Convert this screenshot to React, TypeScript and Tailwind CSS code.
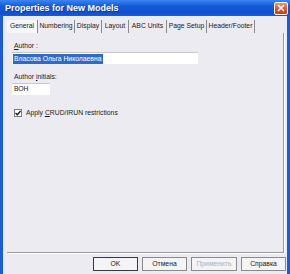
import React from "react";

const tabs: { t: string; w: string }[] = [
  { t: "General", w: "w-[31px]" },
  { t: "Numbering", w: "w-[37px]" },
  { t: "Display", w: "w-[27px]" },
  { t: "Layout", w: "w-[27px]" },
  { t: "ABC Units", w: "w-[38px]" },
  { t: "Page Setup", w: "w-[40px]" },
  { t: "Header/Footer", w: "w-[48px]" },
];

export default function App() {
  return (
    <div
      className="w-[290px] h-[274px] overflow-hidden flex flex-col bg-[#1f5ad6] text-[#1a1a1a]"
      style={{ fontFamily: '"Liberation Sans", Arial, sans-serif' }}
    >
      {/* Title bar */}
      <div className="h-[16px] flex items-center justify-between pl-[5px] pr-[2px] bg-[linear-gradient(#3a86f0,#1458d8_40%,#0f50d0_80%,#1a5ad6)]">
        <span className="text-white font-bold text-[9px] leading-none [text-shadow:1px_1px_0_#0a3a9a]">
          Properties for New Models
        </span>
        <div className="w-[14px] h-[13px] rounded-[2px] border border-white bg-[linear-gradient(#f0906a,#e0502a_60%,#c8401c)] flex items-center justify-center">
          <svg width="8" height="8" viewBox="0 0 8 8">
            <path d="M1 1 L7 7 M7 1 L1 7" stroke="white" strokeWidth="1.6" />
          </svg>
        </div>
      </div>

      {/* Body */}
      <div className="flex-1 mx-[3px] bg-[#ecebf1] flex flex-col text-[6.8px]">
        {/* Tabs */}
        <div className="h-[17px] flex items-end pl-[4px] pt-[4px]">
          {tabs.map((tab, i) => (
            <div
              key={tab.t}
              className={
                tab.w +
                " h-[13px] flex items-center justify-center whitespace-nowrap leading-none border-r border-[#8a8a8a] " +
                (i === 0 ? "bg-[#f6f6f8]" : "")
              }
            >
              {tab.t}
            </div>
          ))}
        </div>

        {/* Panel */}
        <div className="h-[220px] ml-[4px] mr-[3px] border-r border-b border-[#9a9a9a] shadow-[1px_1px_0_#ffffff] flex flex-col pl-[5px] pt-[8px]">
          <div className="leading-[10px] ml-[2px]">
            <span className="underline">A</span>uthor :
          </div>
          <div className="mt-[1px] w-[186px] h-[12px] bg-white border-t border-[#c8c8c8] flex items-center pl-[1px]">
            <span className="bg-[#316ac5] text-white leading-[10px] px-[1px]">
              Власова Ольга Николаевна
            </span>
          </div>
          <div className="mt-[8px] leading-[10px] ml-[2px]">
            Author <span className="underline">i</span>nitials:
          </div>
          <div className="mt-[1px] w-[38px] h-[12px] bg-white border-t border-[#c8c8c8] flex items-center pl-[2px]">
            ВОН
          </div>
          <div className="mt-[14px] flex items-center ml-[2px] gap-[4px]">
            <div className="w-[8px] h-[8px] bg-white border border-[#7a7a7a] flex items-center justify-center">
              <svg width="6" height="6" viewBox="0 0 6 6">
                <path d="M0.5 3 L2.3 4.8 L5.5 1" stroke="#111" strokeWidth="1.3" fill="none" />
              </svg>
            </div>
            <span className="leading-none">
              Apply <span className="underline">C</span>RUD/IRUN restrictions
            </span>
          </div>
        </div>

        {/* Buttons */}
        <div className="flex justify-end gap-[4px] pr-[1px] pt-[4px]">
          <button className="w-[45px] h-[14px] border border-[#3a3a3a] bg-[#f4f4f6] leading-none">OK</button>
          <button className="w-[45px] h-[14px] border border-[#8a8a8a] bg-[#f4f4f6] leading-none">Отмена</button>
          <button className="w-[46px] h-[14px] border border-[#8a8a8a] bg-[#f4f4f6] leading-none text-[#b0b0b0]">Применить</button>
          <button className="w-[45px] h-[14px] border border-[#8a8a8a] bg-[#f4f4f6] leading-none">Справка</button>
        </div>
      </div>
    </div>
  );
}
